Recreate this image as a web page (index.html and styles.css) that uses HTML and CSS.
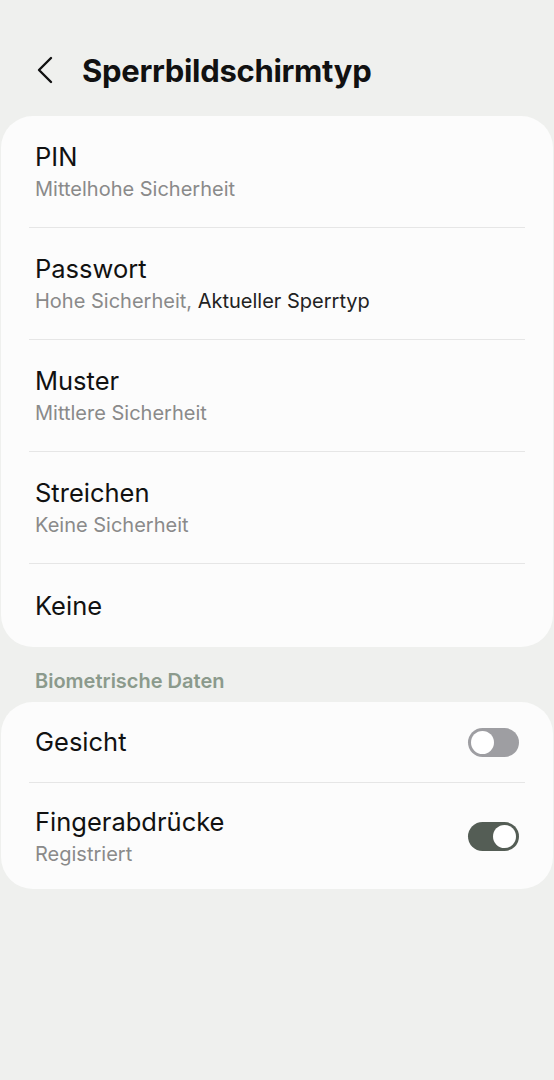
FILE: index.html
```html
<!DOCTYPE html>
<html lang="de">
<head>
  <meta charset="UTF-8">
  <meta name="viewport" content="width=device-width, initial-scale=1.0">
  <title>Sperrbildschirmtyp</title>
  <link rel="stylesheet" href="styles.css">
</head>
<body>
  <header class="top-bar">
    <svg class="back" width="18" height="28" viewBox="0 0 18 28">
      <path d="M15 2 L3 14 L15 26" fill="none" stroke="#111" stroke-width="2.4" stroke-linecap="round" stroke-linejoin="round"/>
    </svg>
    <h1>Sperrbildschirmtyp</h1>
  </header>

  <section class="card">
    <div class="row">
      <div class="title">PIN</div>
      <div class="sub">Mittelhohe Sicherheit</div>
    </div>
    <div class="row">
      <div class="title">Passwort</div>
      <div class="sub">Hohe Sicherheit, <span class="current">Aktueller Sperrtyp</span></div>
    </div>
    <div class="row">
      <div class="title">Muster</div>
      <div class="sub">Mittlere Sicherheit</div>
    </div>
    <div class="row">
      <div class="title">Streichen</div>
      <div class="sub">Keine Sicherheit</div>
    </div>
    <div class="row single">
      <div class="title">Keine</div>
    </div>
  </section>

  <div class="section-label">Biometrische Daten</div>

  <section class="card">
    <div class="row toggle-row single">
      <div class="title">Gesicht</div>
      <span class="switch"></span>
    </div>
    <div class="row toggle-row">
      <div>
        <div class="title">Fingerabdrücke</div>
        <div class="sub">Registriert</div>
      </div>
      <span class="switch on"></span>
    </div>
  </section>
</body>
</html>
```

FILE: styles.css
```css
body {
  margin: 0;
  background-color: #eff0ee;
  font-family: Inter, "Noto Sans", sans-serif;
  color: #111;
}

.top-bar {
  display: flex;
  align-items: center;
  height: 116px;
  padding: 24px 0 0 36px;
  box-sizing: border-box;
}

.back {
  margin-right: 28px;
}

.top-bar h1 {
  margin: 0;
  font-size: 31px;
  font-weight: 700;
  letter-spacing: -0.3px;
}

.card {
  background-color: #fcfcfc;
  border-radius: 32px;
  margin: 0 1px;
  padding: 0 28px;
}

.row {
  height: 112px;
  display: flex;
  flex-direction: column;
  justify-content: center;
  padding: 0 6px;
  border-bottom: 1px solid #e6e6e6;
  box-sizing: border-box;
}

.row:last-child {
  border-bottom: none;
}

.row.single {
  height: 83px;
}

.title {
  font-size: 25.5px;
  line-height: 32px;
}

.sub {
  font-size: 20px;
  line-height: 26px;
  color: #8a8a8a;
  margin-top: 3px;
}

.sub .current {
  color: #222;
}

.section-label {
  padding: 22px 35px 9px;
  font-size: 20px;
  line-height: 24px;
  font-weight: 600;
  color: #8b9a8c;
}

.toggle-row {
  flex-direction: row;
  align-items: center;
  justify-content: space-between;
  padding-right: 6px;
}

.card .toggle-row.single {
  height: 81px;
}

.toggle-row:last-child {
  height: 106px;
}

.switch {
  position: relative;
  width: 51px;
  height: 29px;
  border-radius: 15px;
  background-color: #9e9ea2;
}

.switch::after {
  content: "";
  position: absolute;
  top: 3px;
  left: 3px;
  width: 23px;
  height: 23px;
  border-radius: 50%;
  background-color: #fff;
}

.switch.on {
  background-color: #545d55;
}

.switch.on::after {
  left: 25px;
}
```
